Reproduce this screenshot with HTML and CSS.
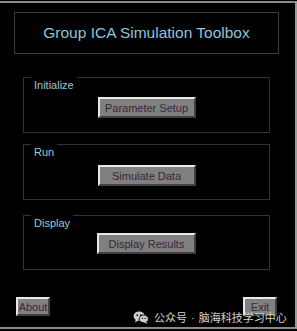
FILE: index.html
```html
<!DOCTYPE html>
<html>
<head>
<meta charset="utf-8">
<link rel="stylesheet" href="styles.css">
</head>
<body>
<div class="window">
  <div class="title-box">Group ICA Simulation Toolbox</div>
  <div class="panel panel-init">
    <span class="panel-title">Initialize</span>
    <button class="btn btn-main">Parameter Setup</button>
  </div>
  <div class="panel panel-run">
    <span class="panel-title">Run</span>
    <button class="btn btn-main">Simulate Data</button>
  </div>
  <div class="panel panel-display">
    <span class="panel-title">Display</span>
    <button class="btn btn-main">Display Results</button>
  </div>
  <div class="footer">
    <button class="btn btn-small">About</button>
    <button class="btn btn-small">Exit</button>
  </div>
  <div class="watermark">
    <svg class="wm-icon" width="16" height="13" viewBox="0 0 17 14">
      <ellipse cx="6.5" cy="5.5" rx="6" ry="5" fill="#cfcfcf"/>
      <path d="M3 9 L2 12.5 L6 10 Z" fill="#cfcfcf"/>
      <ellipse cx="11.5" cy="8.5" rx="5" ry="4.2" fill="#cfcfcf" stroke="#000" stroke-width="1"/>
      <path d="M14 11.5 L15.5 13.8 L11.5 12.5 Z" fill="#cfcfcf"/>
      <circle cx="4.5" cy="4.5" r="0.9" fill="#000"/>
      <circle cx="8.3" cy="4.5" r="0.9" fill="#000"/>
      <circle cx="10" cy="8" r="0.7" fill="#000"/>
      <circle cx="13" cy="8" r="0.7" fill="#000"/>
    </svg>
    <span class="wm-text">公众号<span class="wm-dot">·</span>脑海科技学习中心</span>
  </div>
</div>
</body>
</html>
```
FILE: styles.css
```css
html, body {
  margin: 0;
  padding: 0;
  background: #000;
  width: 297px;
  height: 331px;
  overflow: hidden;
}
.window {
  position: relative;
  box-sizing: border-box;
  width: 297px;
  height: 328px;
  margin-top: 1px;
  border-top: 2px solid #8a8a8a;
  border-right: 2px solid #9a9a9a;
  border-bottom: 2px solid #8a8a8a;
  background: #000;
  padding-top: 9px;
  font-family: "Liberation Sans", Arial, sans-serif;
}
.title-box {
  box-sizing: border-box;
  margin-left: 14px;
  width: 265px;
  height: 42px;
  border: 1px solid #3c3c3c;
  color: #8cc6de;
  font-size: 15.5px;
  display: flex;
  align-items: center;
  justify-content: center;
  padding-bottom: 1px;
}
.panel {
  box-sizing: border-box;
  margin-left: 23px;
  width: 247px;
  border: 1px solid #333;
  display: flex;
  flex-direction: column;
  align-items: center;
}
.panel-init { margin-top: 23px; height: 56px; }
.panel-run { margin-top: 11px; height: 56px; }
.panel-display { margin-top: 15px; height: 55px; }
.panel-title {
  align-self: flex-start;
  margin-left: 7px;
  margin-top: -1px;
  padding: 1px 3px 0 3px;
  background: #000;
  color: #9cc8d6;
  font-size: 11px;
  line-height: 14px;
  height: 14px;
}
.btn {
  box-sizing: border-box;
  background: #808080;
  color: #3a2638;
  font-family: "Liberation Sans", Arial, sans-serif;
  font-size: 11px;
  border-top: 2px solid #e8e8e8;
  border-left: 2px solid #e8e8e8;
  border-right: 2px solid #404040;
  border-bottom: 2px solid #404040;
  padding: 0;
  margin: 0;
}
.btn-main {
  margin-top: 5px;
  width: 98px;
  height: 21px;
}
.panel-run .btn-main { margin-top: 6px; }
.panel-display .btn-main { margin-top: 3px; width: 99px; }
.footer {
  display: flex;
  justify-content: space-between;
  margin-top: 27px;
  padding-left: 16px;
  padding-right: 18px;
}
.btn-small {
  width: 34px;
  height: 19px;
}
.watermark {
  position: absolute;
  left: 133px;
  top: 306px;
  display: flex;
  align-items: center;
  gap: 5px;
  white-space: nowrap;
}
.wm-text {
  color: #d2d2d2;
  font-family: "Noto Sans CJK SC", sans-serif;
  font-size: 11px;
  line-height: 16px;
  white-space: nowrap;
}
.wm-dot {
  font-family: "Liberation Sans", Arial, sans-serif;
  margin: 0 4px;
}
```
